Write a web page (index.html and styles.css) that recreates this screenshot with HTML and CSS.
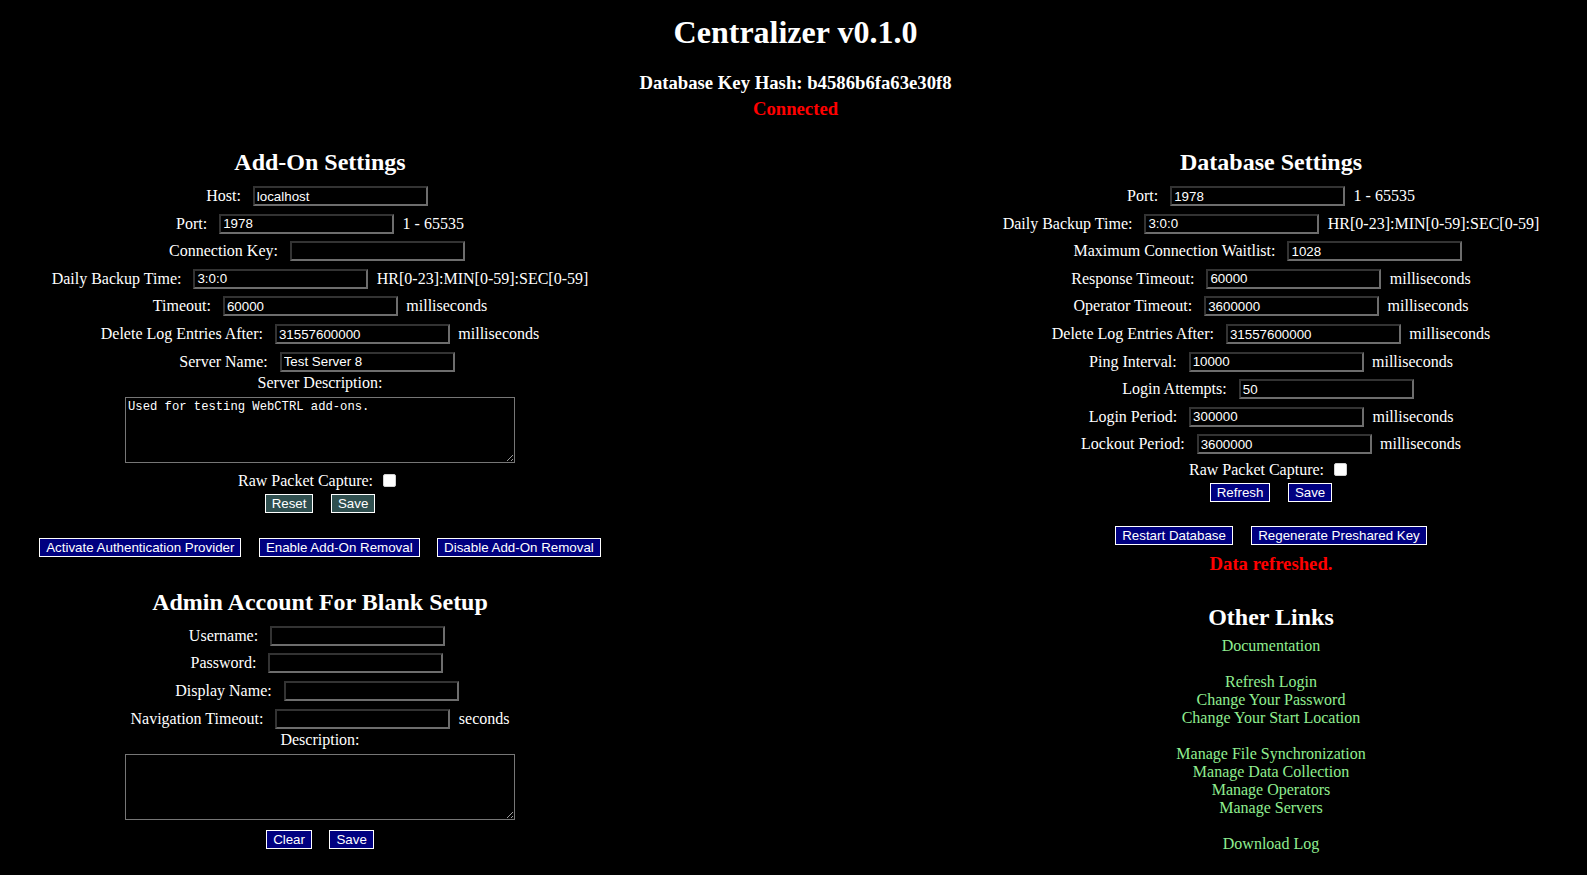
FILE: index.html
```html
<!DOCTYPE html>
<html lang="en">
<head>
<meta charset="utf-8">
<title>Centralizer</title>
<link rel="stylesheet" href="styles.css">
</head>
<body>
<h1 class="title">Centralizer v0.1.0</h1>
<div class="hash">Database Key Hash: b4586b6fa63e30f8</div>
<div class="status">Connected</div>
<main class="columns">
  <section class="col">
    <h2 class="section-title">Add-On Settings</h2>
    <div class="field"><label>Host:</label><input class="text" type="text" value="localhost"></div>
    <div class="field"><label>Port:</label><input class="text" type="text" value="1978"><span class="unit">1 - 65535</span></div>
    <div class="field"><label>Connection Key:</label><input class="text" type="text" value=""></div>
    <div class="field"><label>Daily Backup Time:</label><input class="text" type="text" value="3:0:0"><span class="unit">HR[0-23]:MIN[0-59]:SEC[0-59]</span></div>
    <div class="field"><label>Timeout:</label><input class="text" type="text" value="60000"><span class="unit">milliseconds</span></div>
    <div class="field"><label>Delete Log Entries After:</label><input class="text" type="text" value="31557600000"><span class="unit">milliseconds</span></div>
    <div class="field"><label>Server Name:</label><input class="text" type="text" value="Test Server 8"></div>
    <div class="caption">Server Description:</div>
    <textarea class="area">Used for testing WebCTRL add-ons.</textarea>
    <div class="check-row check-row--after-area"><label>Raw Packet Capture:</label><input class="check" type="checkbox"></div>
    <div class="btn-row btn-row--form"><button class="btn btn--slate">Reset</button><button class="btn btn--slate">Save</button></div>
    <div class="btn-row btn-row--actions"><button class="btn">Activate Authentication Provider</button><button class="btn">Enable Add-On Removal</button><button class="btn">Disable Add-On Removal</button></div>

    <h2 class="section-title section-title--admin">Admin Account For Blank Setup</h2>
    <div class="field"><label>Username:</label><input class="text" type="text"></div>
    <div class="field"><label>Password:</label><input class="text" type="password"></div>
    <div class="field"><label>Display Name:</label><input class="text" type="text"></div>
    <div class="field"><label>Navigation Timeout:</label><input class="text" type="text"><span class="unit">seconds</span></div>
    <div class="caption">Description:</div>
    <textarea class="area"></textarea>
    <div class="btn-row btn-row--admin"><button class="btn">Clear</button><button class="btn">Save</button></div>
  </section>

  <section class="col">
    <h2 class="section-title">Database Settings</h2>
    <div class="field"><label>Port:</label><input class="text" type="text" value="1978"><span class="unit">1 - 65535</span></div>
    <div class="field"><label>Daily Backup Time:</label><input class="text" type="text" value="3:0:0"><span class="unit">HR[0-23]:MIN[0-59]:SEC[0-59]</span></div>
    <div class="field"><label>Maximum Connection Waitlist:</label><input class="text" type="text" value="1028"></div>
    <div class="field"><label>Response Timeout:</label><input class="text" type="text" value="60000"><span class="unit">milliseconds</span></div>
    <div class="field"><label>Operator Timeout:</label><input class="text" type="text" value="3600000"><span class="unit">milliseconds</span></div>
    <div class="field"><label>Delete Log Entries After:</label><input class="text" type="text" value="31557600000"><span class="unit">milliseconds</span></div>
    <div class="field"><label>Ping Interval:</label><input class="text" type="text" value="10000"><span class="unit">milliseconds</span></div>
    <div class="field"><label>Login Attempts:</label><input class="text" type="text" value="50"></div>
    <div class="field"><label>Login Period:</label><input class="text" type="text" value="300000"><span class="unit">milliseconds</span></div>
    <div class="field"><label>Lockout Period:</label><input class="text" type="text" value="3600000"><span class="unit">milliseconds</span></div>
    <div class="check-row check-row--after-fields"><label>Raw Packet Capture:</label><input class="check" type="checkbox"></div>
    <div class="btn-row btn-row--form"><button class="btn">Refresh</button><button class="btn">Save</button></div>
    <div class="btn-row btn-row--db"><button class="btn">Restart Database</button><button class="btn">Regenerate Preshared Key</button></div>
    <div class="notice">Data refreshed.</div>

    <h2 class="section-title section-title--links">Other Links</h2>
    <nav class="links">
      <div class="link-group">
        <a href="#">Documentation</a>
      </div>
      <div class="link-group">
        <a href="#">Refresh Login</a>
        <a href="#">Change Your Password</a>
        <a href="#">Change Your Start Location</a>
      </div>
      <div class="link-group">
        <a href="#">Manage File Synchronization</a>
        <a href="#">Manage Data Collection</a>
        <a href="#">Manage Operators</a>
        <a href="#">Manage Servers</a>
      </div>
      <div class="link-group">
        <a href="#">Download Log</a>
      </div>
    </nav>
  </section>
</main>
</body>
</html>
```

FILE: styles.css
```css
html, body {
  margin: 0;
  padding: 0;
  background: #000;
  color: #fff;
}

body {
  padding-left: 4px;
  font-family: "Liberation Serif", "Times New Roman", serif;
  font-size: 16px;
  overflow: hidden;
}

.title {
  margin: 14px 0 0;
  font-size: 32px;
  line-height: 36px;
  font-weight: bold;
  text-align: center;
}

.hash,
.status,
.notice {
  font-size: 18.72px;
  line-height: 22px;
  font-weight: bold;
  text-align: center;
}

.hash {
  margin-top: 21.8px;
}

.status {
  margin-top: 4px;
  color: #ff0000;
}

.columns {
  display: flex;
  justify-content: space-between;
  padding: 0 6px;
  margin-top: 28.2px;
}

.col {
  width: 620px;
  display: flex;
  flex-direction: column;
  align-items: center;
}

.section-title {
  margin: 0 0 6.3px;
  font-size: 24px;
  line-height: 28px;
  font-weight: bold;
  text-align: center;
}

.section-title--admin {
  margin-top: 30.9px;
}

.section-title--links {
  margin-top: 27.5px;
  margin-bottom: 5.9px;
}

.field {
  display: flex;
  align-items: center;
  height: 27.6px;
}

.field label {
  line-height: 20px;
}

.text {
  box-sizing: border-box;
  width: 175px;
  height: 20px;
  margin: 0 6px 0 12px;
  padding: 1px 2px;
  border: 2px solid;
  border-color: #333 #6d6d6d #6d6d6d #333;
  background: #000;
  color: #fff;
  font-family: "Liberation Sans", Arial, sans-serif;
  font-size: 13.33px;
  outline: none;
}

.unit {
  margin-left: 2.4px;
  line-height: 20px;
}

.caption {
  line-height: 18px;
  margin-top: -1px;
}

.area {
  box-sizing: border-box;
  width: 390px;
  height: 65.4px;
  margin: 4.9px 0 0;
  padding: 2px;
  border: 1px solid #767676;
  background: #000;
  color: #fff;
  font-family: "Liberation Mono", "Courier New", monospace;
  font-size: 12.2px;
  line-height: 15px;
  resize: both;
  outline: none;
}

.check-row {
  display: flex;
  align-items: flex-start;
  line-height: 18px;
}

.check-row--after-area {
  margin-top: 8.9px;
}

.check-row--after-fields {
  margin-top: 2.4px;
}

.check-row label {
  margin-right: 10px;
}

.check {
  appearance: none;
  -webkit-appearance: none;
  box-sizing: border-box;
  width: 13px;
  height: 13px;
  margin: 2.2px 6px 0 0;
  border: 1px solid #d0d0d0;
  border-radius: 2px;
  background: #fff;
}

.btn-row {
  display: flex;
  justify-content: center;
  gap: 17.5px;
}

.btn-row--form {
  margin-top: 4.3px;
}

.btn-row--actions {
  margin-top: 25px;
}

.btn-row--db {
  margin-top: 24.1px;
  gap: 18.3px;
}

.btn-row--admin {
  margin-top: 10.3px;
}

.btn {
  box-sizing: border-box;
  height: 19px;
  margin: 0;
  padding: 1px 6px;
  border: 1px solid #fff;
  background: #000080;
  color: #fff;
  font-family: "Liberation Sans", Arial, sans-serif;
  font-size: 13.33px;
  line-height: 15px;
  cursor: pointer;
}

.btn--slate {
  background: #2f4f4f;
}

.notice {
  margin-top: 8.3px;
  color: #ff0000;
}

.links {
  display: flex;
  flex-direction: column;
  align-items: center;
  line-height: 18px;
}

.link-group {
  display: flex;
  flex-direction: column;
  align-items: center;
  margin-bottom: 18px;
}

.links a {
  color: #90ee90;
  text-decoration: none;
}
```
